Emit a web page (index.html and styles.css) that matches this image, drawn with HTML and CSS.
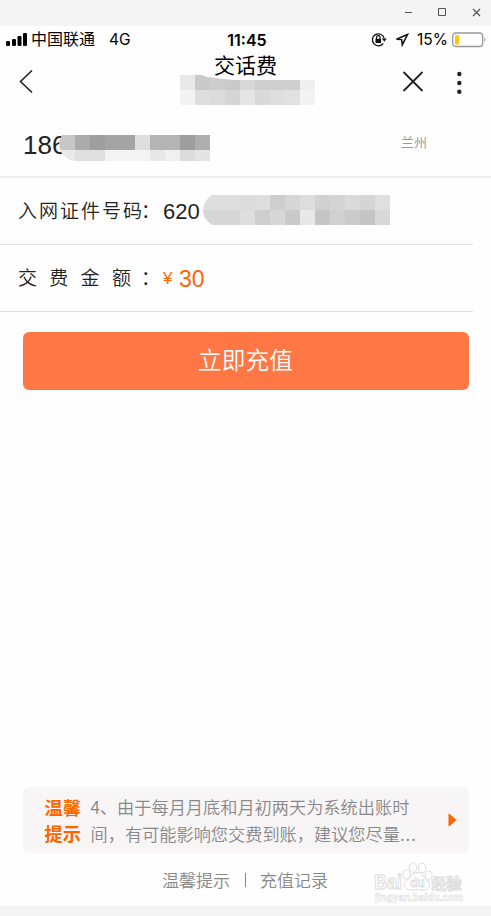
FILE: index.html
```html
<!DOCTYPE html>
<html lang="zh-CN">
<head>
  <meta charset="UTF-8" />
  <meta name="viewport" content="width=device-width, initial-scale=1.0" />
  <title>交话费</title>
  <link rel="stylesheet" href="styles.css">
</head>
<body>
  <div class="window-bar">
    <svg width="491" height="26" fill="none" stroke="#555">
      <path d="M405 12.500h7M438.500 8.500h7v7h-7z" />
      <path d="M473 9l7 7M480 9l-7 7" stroke-width="1.300" />
    </svg>
  </div>

  <div class="status-bar">
    <div class="carrier">
      <svg class="signal" width="22" height="14" fill="#000">
        <rect x="0" y="8" width="4" height="5" rx="1.300" />
        <rect x="6" y="6" width="4" height="7" rx="1.300" />
        <rect x="11.500" y="3" width="4" height="10" rx="1.300" />
        <rect x="17" y="0" width="4" height="13" rx="1.300" />
      </svg>
      <span class="operator">中国联通</span>
      <span class="network">4G</span>
    </div>
    <div class="clock">11:45</div>
    <div class="battery">
      <svg class="status-icons" width="38" height="16" fill="none" stroke="#111">
        <path d="M12.300 11.300A6 6 0 1 1 13.100 6" stroke-width="1.300" />
        <path d="M10.800 6.500h5l-2.500 3.200z" fill="#111" stroke="none" />
        <path d="M5.500 7V5.500a1.800 1.800 0 0 1 3.600 0V7" stroke-width="1.200" />
        <path d="M4.500 6.800h5.600v4.200H4.500z" fill="#111" stroke="none" />
        <path d="M25.500 7.300L36.500 2.500l-5.200 10.400-.6-5.300z" stroke-width="1.500" />
      </svg>
      <span class="percent">15%</span>
      <svg width="35" height="16" fill="none">
        <rect x=".7" y="1" width="30" height="13.500" rx="3" stroke="#999" stroke-width="1.300" />
        <rect x="3" y="3.200" width="4" height="9.300" fill="#ffc800" />
        <path d="M32.500 5.500q2 2.200 0 4.400z" fill="#888" />
      </svg>
    </div>
  </div>

  <div class="header">
    <svg class="back" width="16" height="26" fill="none" stroke="#222" stroke-width="1.600">
      <path d="M13 1.500L1.500 12.500l11.500 11" />
    </svg>
    <h1>交话费</h1>
    <svg class="mosaic title-mosaic" width="135" height="30" shape-rendering="crispEdges">
      <clipPath id="titleClip"><path d="M0 0h22l5 2 8 1 18 2h82v25H0z" /></clipPath>
      <g clip-path="url(#titleClip)">
        <path d="M0 0h15v15H0z" fill="#e9e9e9" />
        <path d="M15 0h15v15H15z" fill="#cacaca" />
        <path d="M30 0h15v15H30z" fill="#cdcdcd" />
        <path d="M45 0h15v15H45z" fill="#cacaca" />
        <path d="M60 0h15v15H60z" fill="#d8d8d8" />
        <path d="M75 0h45v15H75z" fill="#cfcfcf" />
        <path d="M120 0h15v15h-15z" fill="#efefef" />
        <path d="M0 15h15v15H0z" fill="#f3f3f3" />
        <path d="M15 15h15v15H15z" fill="#dedede" />
        <path d="M30 15h15v15H30z" fill="#dbdbdb" />
        <path d="M45 15h15v15H45z" fill="#d5d5d5" />
        <path d="M60 15h15v15H60z" fill="#e5e5e5" />
        <path d="M75 15h15v15H75z" fill="#d9d9d9" />
        <path d="M90 15h15v15H90z" fill="#dedede" />
        <path d="M105 15h15v15h-15z" fill="#e1e1e1" />
        <path d="M120 15h15v15h-15z" fill="#f3f3f3" />
      </g>
    </svg>
    <svg class="actions" width="60" height="26" fill="none" stroke="#222" stroke-width="1.800">
      <path d="M1.500 3l19 19M20.500 3l-19 19" />
      <g fill="#222" stroke="none">
        <circle cx="57.300" cy="5" r="2.200" />
        <circle cx="57.300" cy="14" r="2.200" />
        <circle cx="57.300" cy="22.700" r="2.200" />
      </g>
    </svg>
  </div>

  <div class="phone-row">
    <span class="phone">186</span>
    <svg class="mosaic phone-mosaic" width="152" height="26" shape-rendering="crispEdges">
      <clipPath id="phoneClip"><path d="M4 0h148v26H16Q7 24 3 17 0 9 2 4z" /></clipPath>
      <g clip-path="url(#phoneClip)">
        <path d="M0 0h17v15H0z" fill="#c7c7c7" />
        <path d="M17 0h15v15H17z" fill="#ababab" />
        <path d="M32 0h15v15H32z" fill="#9e9e9e" />
        <path d="M47 0h30v15H47z" fill="#a4a4a4" />
        <path d="M77 0h15v15H77z" fill="#dedede" />
        <path d="M92 0h30v15H92z" fill="#b4b4b4" />
        <path d="M122 0h15v15h-15z" fill="#9e9e9e" />
        <path d="M137 0h15v15h-15z" fill="#aeaeae" />
        <path d="M0 15h17v11H0z" fill="#e9e9e9" />
        <path d="M17 15h30v11H17z" fill="#dfdfdf" />
        <path d="M47 15h45v11H47z" fill="#f4f4f4" />
        <path d="M92 15h15v11H92z" fill="#e8e8e8" />
        <path d="M107 15h15v11h-15z" fill="#f0f0f0" />
        <path d="M122 15h15v11h-15z" fill="#dcdcdc" />
        <path d="M137 15h15v11h-15z" fill="#e4e4e4" />
      </g>
    </svg>
    <span class="city">兰州</span>
  </div>

  <div class="row">
    <span class="label">入网证件号码</span>
    <span class="colon">：</span>
    <span class="id-number">620</span>
    <svg class="mosaic id-mosaic" width="187" height="30" shape-rendering="crispEdges">
      <clipPath id="idClip"><path d="M9 0h178v30H9Q0 24 0 15T9 0z" /></clipPath>
      <g clip-path="url(#idClip)">
        <path d="M0 0h67v15H0z" fill="#dedede" />
        <path d="M37 0h15v15H37z" fill="#dbdbdb" />
        <path d="M67 0h15v15H67z" fill="#cecece" />
        <path d="M82 0h15v15H82z" fill="#d6d6d6" />
        <path d="M97 0h15v15H97z" fill="#dddddd" />
        <path d="M112 0h15v15h-15z" fill="#d1d1d1" />
        <path d="M127 0h15v15h-15z" fill="#d4d4d4" />
        <path d="M142 0h15v15h-15z" fill="#dadada" />
        <path d="M157 0h15v15h-15z" fill="#d5d5d5" />
        <path d="M172 0h15v15h-15z" fill="#dfdfdf" />
        <path d="M0 15h37v15H0z" fill="#d6d6d6" />
        <path d="M37 15h15v15H37z" fill="#dedede" />
        <path d="M52 15h15v15H52z" fill="#cecece" />
        <path d="M67 15h15v15H67z" fill="#d7d7d7" />
        <path d="M82 15h15v15H82z" fill="#cacaca" />
        <path d="M97 15h15v15H97z" fill="#e8e8e8" />
        <path d="M112 15h15v15h-15z" fill="#c5c5c5" />
        <path d="M127 15h15v15h-15z" fill="#d1d1d1" />
        <path d="M142 15h15v15h-15z" fill="#cbcbcb" />
        <path d="M157 15h15v15h-15z" fill="#c4c4c4" />
        <path d="M172 15h15v15h-15z" fill="#d8d8d8" />
      </g>
    </svg>
  </div>

  <div class="row">
    <span class="label amount-label">交费金额</span>
    <span class="colon">：</span>
    <span class="yen">¥</span>
    <span class="amount">30</span>
  </div>

  <button class="pay-button" type="button">立即充值</button>

  <div class="notice">
    <div class="notice-title">温馨<br>提示</div>
    <div class="notice-text">4、由于每月月底和月初两天为系统出账时<br>间，有可能影响您交费到账，建议您尽量<span class="dots">...</span></div>
    <svg class="notice-arrow" width="9" height="14" fill="#ff6600">
      <path d="M.5 1.200Q.5 0 1.700 1L8.500 7l-6.800 6Q.5 14 .5 12.800z" />
    </svg>
  </div>

  <div class="footer">
    <a class="footer-link">温馨提示</a>
    <span class="divider"></span>
    <a class="footer-link">充值记录</a>
  </div>

  <div class="bottom-bar"></div>

  <svg class="watermark" width="100" height="46" fill="#fff" stroke="#dcdcdc" stroke-width="1">
    <text class="mark-name" x="3" y="30" textLength="28" lengthAdjust="spacingAndGlyphs">Bai</text>
    <ellipse cx="35.500" cy="15.500" rx="3.500" ry="4.500" />
    <ellipse cx="42" cy="8.500" rx="3.700" ry="4.800" />
    <ellipse cx="51" cy="9" rx="3.700" ry="4.800" />
    <ellipse cx="57.500" cy="16.500" rx="3.500" ry="4.500" />
    <path d="M46 13.500c5 0 6 4 9 7 6 4 4 11-3 10.500-3 0-4-.5-6-.5s-4 .5-6 .5c-7 0-9-6.500-3-10.500 4-3 4-7 9-7z" />
    <text class="mark-du" x="39" y="28">du</text>
    <text class="mark-cn" x="60.500" y="30">经验</text>
    <text class="mark-url" x="4" y="42" textLength="88" lengthAdjust="spacingAndGlyphs">jingyan.baidu.com</text>
  </svg>
</body>
</html>
```
FILE: styles.css
```css
* {
  box-sizing: border-box;
}

body {
  position: relative;
  display: flex;
  flex-direction: column;
  height: 916px;
  margin: 0;
  overflow: hidden;
  background-color: #fefefe;
  color: #222;
  font-family: "Liberation Sans", "Noto Sans CJK SC", sans-serif;
}

svg {
  display: block;
  flex-shrink: 0;
}

.window-bar {
  height: 26px;
  background-color: #f4f4f4;
}

.status-bar {
  display: grid;
  grid-template-columns: 1fr 60px 1fr;
  align-items: center;
  height: 28px;
  color: #000;
  font-size: 16px;
  line-height: 28px;
}

.carrier {
  display: flex;
  align-items: center;
  padding-left: 6px;
}

.signal {
  margin-right: 3px;
}

.operator {
  margin-right: 14px;
  font-size: 16px;
}

.network,
.clock,
.percent {
  font-family: Inter, sans-serif;
}

.network {
  font-size: 15.5px;
}

.clock {
  padding-left: 3px;
  font-weight: 600;
  text-align: center;
}

.battery {
  display: flex;
  align-items: center;
  justify-content: flex-end;
  padding-right: 4px;
}

.status-icons {
  margin-right: 8px;
}

.percent {
  margin-right: 4px;
  font-size: 15.5px;
}

.header {
  position: relative;
  display: flex;
  height: 56px;
  padding: 15px 0 0 19px;
}

h1 {
  width: 64px;
  margin: -18px 0 0 179px;
  color: #000;
  font-size: 21px;
  font-weight: 400;
  line-height: 30px;
}

.actions {
  margin-left: 124px;
}

.mosaic {
  position: absolute;
}

.title-mosaic {
  top: 21px;
  left: 180px;
}

.phone-row {
  position: relative;
  display: flex;
  align-items: center;
  justify-content: space-between;
  height: 68px;
  padding: 0 64px 0 23px;
  border-bottom: 2px solid #eee;
}

.phone {
  padding-top: 4px;
  font-size: 26px;
}

.phone-mosaic {
  top: 25px;
  left: 58px;
}

.city {
  padding-bottom: 3px;
  color: #999;
  font-size: 13px;
}

.row {
  position: relative;
  display: flex;
  align-items: center;
  width: 473px;
  height: 67px;
  padding-left: 18px;
  border-bottom: 1px solid #e2e2e2;
}

.label,
.colon {
  padding-bottom: 4px;
  font-size: 19px;
  font-weight: 350;
}

.label {
  width: 123px;
  letter-spacing: 2px;
  white-space: nowrap;
}

.colon {
  width: 22px;
}

.id-number {
  padding-top: 1px;
  font-size: 22px;
}

.id-mosaic {
  top: 17px;
  left: 203px;
}

.amount-label {
  letter-spacing: 12.3px;
}

.yen {
  width: 16px;
  padding-top: 2px;
  color: #ff6600;
  font-size: 17px;
}

.amount {
  padding-top: 2px;
  color: #ff6600;
  font-size: 23px;
}

.pay-button {
  width: 446px;
  height: 58px;
  margin: 20px 0 0 22.5px;
  padding: 0 0 4px;
  border: 0;
  border-radius: 6px;
  background-color: #ff7744;
  color: #fff;
  font-family: inherit;
  font-size: 23.7px;
  font-weight: 350;
}

.notice {
  display: flex;
  align-items: center;
  width: 446px;
  height: 66px;
  margin: auto 0 0 22.5px;
  padding: 0 12px 0 22px;
  border-radius: 6px;
  background-color: #f7f5f6;
  line-height: 26.5px;
}

.notice-title {
  width: 46px;
  padding-top: 4px;
  color: #ff6600;
  font-size: 18.2px;
  font-weight: 700;
}

.notice-text {
  flex: 1;
  padding-top: 1px;
  color: #888;
  font-family: "Noto Sans CJK SC", sans-serif;
  font-size: 17.2px;
  font-weight: 350;
  white-space: nowrap;
}

.dots {
  letter-spacing: 1px;
}

.footer {
  display: flex;
  align-items: center;
  height: 53px;
  padding-left: 162px;
}

.footer-link {
  color: #888;
  font-size: 17px;
  font-weight: 350;
}

.divider {
  width: 1px;
  height: 14px;
  margin: 0 14px 0 15px;
  background-color: #888;
}

.bottom-bar {
  height: 10px;
  background-color: #f4f4f4;
}

.watermark {
  position: absolute;
  top: 859px;
  left: 371px;
  font-weight: 700;
}

.mark-name {
  font-size: 20px;
}

.mark-du {
  font-size: 12px;
  stroke-width: 0.8px;
}

.mark-cn {
  font-size: 15px;
}

.mark-url {
  font-size: 10px;
  stroke-width: 0.5px;
}
```
